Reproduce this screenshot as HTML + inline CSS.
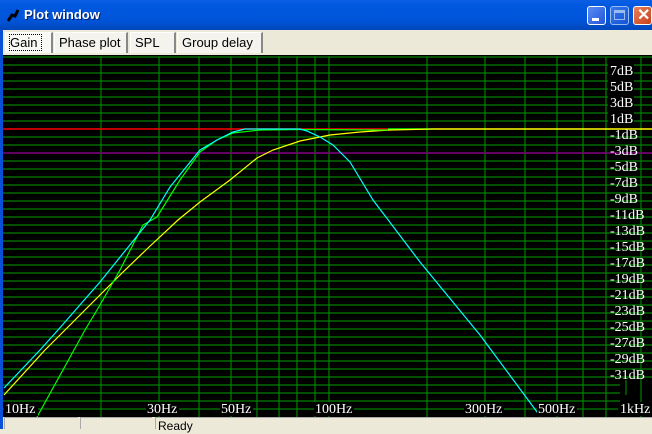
<!DOCTYPE html><html><head><style>
body{margin:0;width:652px;height:429px;overflow:hidden;background:#ece9d8;font-family:"Liberation Sans",sans-serif;position:relative}
.tb{position:absolute;left:0;top:0;width:652px;height:30px;background:linear-gradient(#0a5fe6,#0058e0 20%,#0054d8 70%,#0046b8);}
.tt{position:absolute;left:24px;top:7px;color:#fff;font-weight:bold;font-size:13px;text-shadow:1px 1px #0a1e6a}
.btn{position:absolute;top:6px;width:19px;height:19px;border:1px solid #fff;border-radius:3px;box-sizing:border-box;background:linear-gradient(135deg,#5a8cf4,#2256d8)}
.tab{position:absolute;top:32px;height:21px;background:#f4f3ee;border:1px solid #fff;border-right:2px solid #888;border-bottom:none;font-size:13px;line-height:20px;padding-left:4px;box-sizing:border-box}
.st{position:absolute;top:417px;height:12px;border-top:1px solid #aaa;border-left:1px solid #aaa;font-size:12px;box-sizing:border-box}
</style></head><body>
<div class="tb"></div>
<div style="position:absolute;left:0;top:30px;width:3px;height:399px;background:#0a4fd8"></div>
<svg style="position:absolute;left:6px;top:8px" width="14" height="14"><path d="M2 13 L6 7 L9 8 L12 2" stroke="#000" stroke-width="3" fill="none"/></svg>
<div class="tt">Plot window</div>
<div class="btn" style="left:587px"><div style="position:absolute;left:4px;top:11px;width:7px;height:3px;background:#fff"></div></div>
<div class="btn" style="left:610px;opacity:.6"><div style="position:absolute;left:3px;top:3px;width:11px;height:10px;border:1px solid #fff;border-top-width:3px;box-sizing:border-box"></div></div>
<div class="btn" style="left:633px;background:linear-gradient(135deg,#e8805a,#c8401a)"><span style="position:absolute;left:3px;top:-2px;color:#fff;font-size:16px;font-weight:bold">✕</span></div>
<div class="tab" style="left:5px;width:48px;background:#f8f8f4"><span style="outline:1px dotted #000">Gain&nbsp;</span></div>
<div class="tab" style="left:54px;width:74px">Phase plot</div>
<div class="tab" style="left:130px;width:46px">SPL</div>
<div class="tab" style="left:177px;width:86px">Group delay</div>
<svg style="position:absolute;left:3px;top:55px" width="649" height="362" viewBox="3 55 649 362">
<rect x="3" y="55" width="649" height="362" fill="#000"/>
<g stroke="#008000" stroke-width="1.2">
<path d="M3 57H652M3 65H652M3 73H652M3 81H652M3 89H652M3 97H652M3 105H652M3 113H652M3 121H652M3 137H652M3 145H652M3 161H652M3 169H652M3 177H652M3 185H652M3 193H652M3 201H652M3 209H652M3 217H652M3 225H652M3 233H652M3 241H652M3 249H652M3 257H652M3 265H652M3 273H652M3 281H652M3 289H652M3 297H652M3 305H652M3 313H652M3 321H652M3 329H652M3 337H652M3 345H652M3 353H652M3 361H652M3 369H652M3 377H652M3 385H620M3 393H620M3 401H620M3 409H620"/>
<path d="M101 57V417M159 57V417M199 57V417M231 57V417M257 57V417M279 57V417M297 57V417M315 57V417M329 57V417M427 57V417M485 57V417M525 57V417M557 57V417M583 57V417M606 57V417M641 57V417M626 380V395"/>
</g>
<path d="M3 153H652" stroke="#800080" stroke-width="1.5"/>
<path d="M3 129H388" stroke="#f00" stroke-width="1.5"/>
<path d="M388 129H433" stroke="#0f0" stroke-width="1.5"/>
<path d="M433 129H652" stroke="#ff0" stroke-width="1.5"/>
<g fill="none" stroke-width="1.2">
<path stroke="#ff0" d="M4 395L45 350L80 315L122 273L148 248L178 220L200 202L230 180L257 158L273 150L300 141L330 135L360 132L390 130L433 129"/>
<path stroke="#0f0" d="M37 417L85 330L100 305L120 270L143 225L157 217L180 180L200 152L217 140L233 133L260 130L300 129.5L388 130"/>
<path stroke="#0ff" d="M4 388L40 350L58 330L100 282L150 220L170 187L200 150L217 140L233 132L245 129L300 129L307 131L320 137L333 145L350 162L373 200L420 262L480 335L540 416"/>
</g>
<g font-family="Liberation Serif,serif" font-size="14" fill="#fff">
<g fill="#000"><rect x="608" y="63" width="26" height="14"/><rect x="608" y="79" width="26" height="14"/><rect x="608" y="95" width="26" height="14"/><rect x="608" y="111" width="26" height="14"/></g>
<text x="610" y="75">7dB</text><text x="610" y="91">5dB</text><text x="610" y="107">3dB</text><text x="610" y="123">1dB</text>
<text x="610" y="139">-1dB</text><text x="610" y="155">-3dB</text><text x="610" y="171">-5dB</text><text x="610" y="187">-7dB</text><text x="610" y="203">-9dB</text>
<text x="610" y="219">-11dB</text><text x="610" y="235">-13dB</text><text x="610" y="251">-15dB</text><text x="610" y="267">-17dB</text><text x="610" y="283">-19dB</text><text x="610" y="299">-21dB</text><text x="610" y="315">-23dB</text><text x="610" y="331">-25dB</text><text x="610" y="347">-27dB</text><text x="610" y="363">-29dB</text><text x="610" y="379">-31dB</text>
<g fill="#000"><rect x="4" y="402" width="34" height="14"/><rect x="146" y="402" width="33" height="14"/><rect x="220" y="402" width="33" height="14"/><rect x="314" y="402" width="40" height="14"/><rect x="464" y="402" width="40" height="14"/><rect x="537" y="402" width="40" height="14"/><rect x="618" y="402" width="34" height="14"/></g>
<text x="5" y="413">10Hz</text><text x="147" y="413">30Hz</text><text x="221" y="413">50Hz</text><text x="315" y="413">100Hz</text><text x="465" y="413">300Hz</text><text x="538" y="413">500Hz</text><text x="620" y="413">1kHz</text>
</g>
</svg>
<div class="st" style="left:4px;width:74px"></div>
<div class="st" style="left:80px;width:72px"></div>
<div class="st" style="left:155px;width:497px;padding-left:2px;line-height:16px">Ready</div>
</body></html>
